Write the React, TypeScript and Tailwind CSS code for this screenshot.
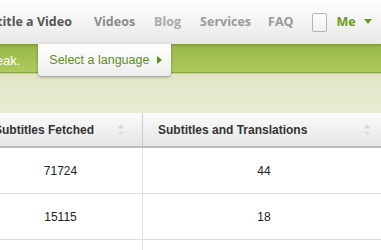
import React from "react";

const NAV = [
  { label: "Videos", cls: "ml-[19px] text-[#8a8a8a]" },
  { label: "Blog", cls: "ml-[19px] text-[#aaaaaa]" },
  { label: "Services", cls: "ml-[19px] text-[#9a9a9a]" },
  { label: "FAQ", cls: "ml-[17px] text-[#9a9a9a]" },
];

const ROWS = [
  ["71724", "44"],
  ["15115", "18"],
  ["", ""],
];

function SortIcon() {
  return (
    <svg width="8" height="12" viewBox="0 0 8 12" className="shrink-0">
      <path d="M4 0.5 L7.5 4.5 L0.5 4.5 Z" fill="#d6d6d6" />
      <path d="M4 11.5 L7.5 7.5 L0.5 7.5 Z" fill="#dedede" />
    </svg>
  );
}

export default function App() {
  return (
    <div className="w-[381px] h-[250px] overflow-hidden bg-white">
      {/* top nav */}
      <div
        className="flex h-[44px] items-center whitespace-nowrap bg-gradient-to-b from-white to-[#e8e8e8] text-[12.5px] font-bold"
        style={{ fontFamily: '"Open Sans", "Liberation Sans", sans-serif' }}
      >
        <span className="-ml-[26px] mr-[3px] text-[#555555]">Subtitle a Video</span>
        {NAV.map((n) => (
          <span key={n.label} className={n.cls}>
            {n.label}
          </span>
        ))}
        <span className="ml-[19px] h-[19px] w-[15px] rounded-[2px] border border-[#b5b5b5] bg-gradient-to-b from-white to-[#f0f0f0]" />
        <span className="ml-[9px] text-[#6b9a1c]">Me</span>
        <svg width="8" height="6" viewBox="0 0 8 6" className="ml-[8px]">
          <path d="M0 0 L8 0 L4 5 Z" fill="#6b9a1c" />
        </svg>
      </div>

      {/* green band */}
      <div
        className="flex h-[29px] items-start border-b border-[#8ba64a] bg-gradient-to-b from-[#99b848] to-[#afc95e] shadow-[inset_0_3px_3px_-2px_rgba(0,0,0,0.25)]"
        style={{ fontFamily: '"Liberation Sans", Arial, sans-serif' }}
      >
        <span className="-ml-[18px] mt-[7px] text-[13px] text-white">speak.</span>
        <div className="relative z-10 ml-[18px] flex h-[32px] w-[133px] items-center rounded-b-[4px] bg-gradient-to-b from-white to-[#eeeeee] pl-[11px] text-[12.5px] text-[#5d8d1e] shadow-[0_1px_3px_rgba(0,0,0,0.35)]">
          Select a language
          <svg width="5" height="8" viewBox="0 0 5 8" className="ml-[8px]">
            <path d="M0 0 L5 4 L0 8 Z" fill="#5d8d1e" />
          </svg>
        </div>
      </div>
      <div className="h-[1px] bg-[#c3d890]" />

      {/* pale area */}
      <div className="h-[39px] bg-gradient-to-b from-[#e3e4c6] to-[#e7eed5]" />

      {/* table */}
      <div
        className="-ml-[21px] w-[406px] text-[#222222]"
        style={{ fontFamily: '"Liberation Sans", Arial, sans-serif' }}
      >
        <div className="grid h-[35px] grid-cols-[164px_242px] border-b-2 border-[#bdbdbd] bg-gradient-to-b from-[#fbfbfb] to-[#e6e6e6] text-[12px] font-bold text-[#333333]">
          <div className="flex items-center justify-between border-r border-[#cccccc] pl-[15px] pr-[17px]">
            <span>Subtitles Fetched</span>
            <SortIcon />
          </div>
          <div className="flex items-center justify-between pl-[15px] pr-[14px]">
            <span>Subtitles and Translations</span>
            <SortIcon />
          </div>
        </div>
        {ROWS.map((r, i) => (
          <div
            key={i}
            className="grid h-[46px] grid-cols-[164px_242px] border-b border-[#dddddd] text-[12px]"
          >
            <div className="flex items-center justify-center border-r border-[#dddddd] pt-[1px]">
              {r[0]}
            </div>
            <div className="flex items-center justify-center pt-[1px]">{r[1]}</div>
          </div>
        ))}
      </div>
    </div>
  );
}
